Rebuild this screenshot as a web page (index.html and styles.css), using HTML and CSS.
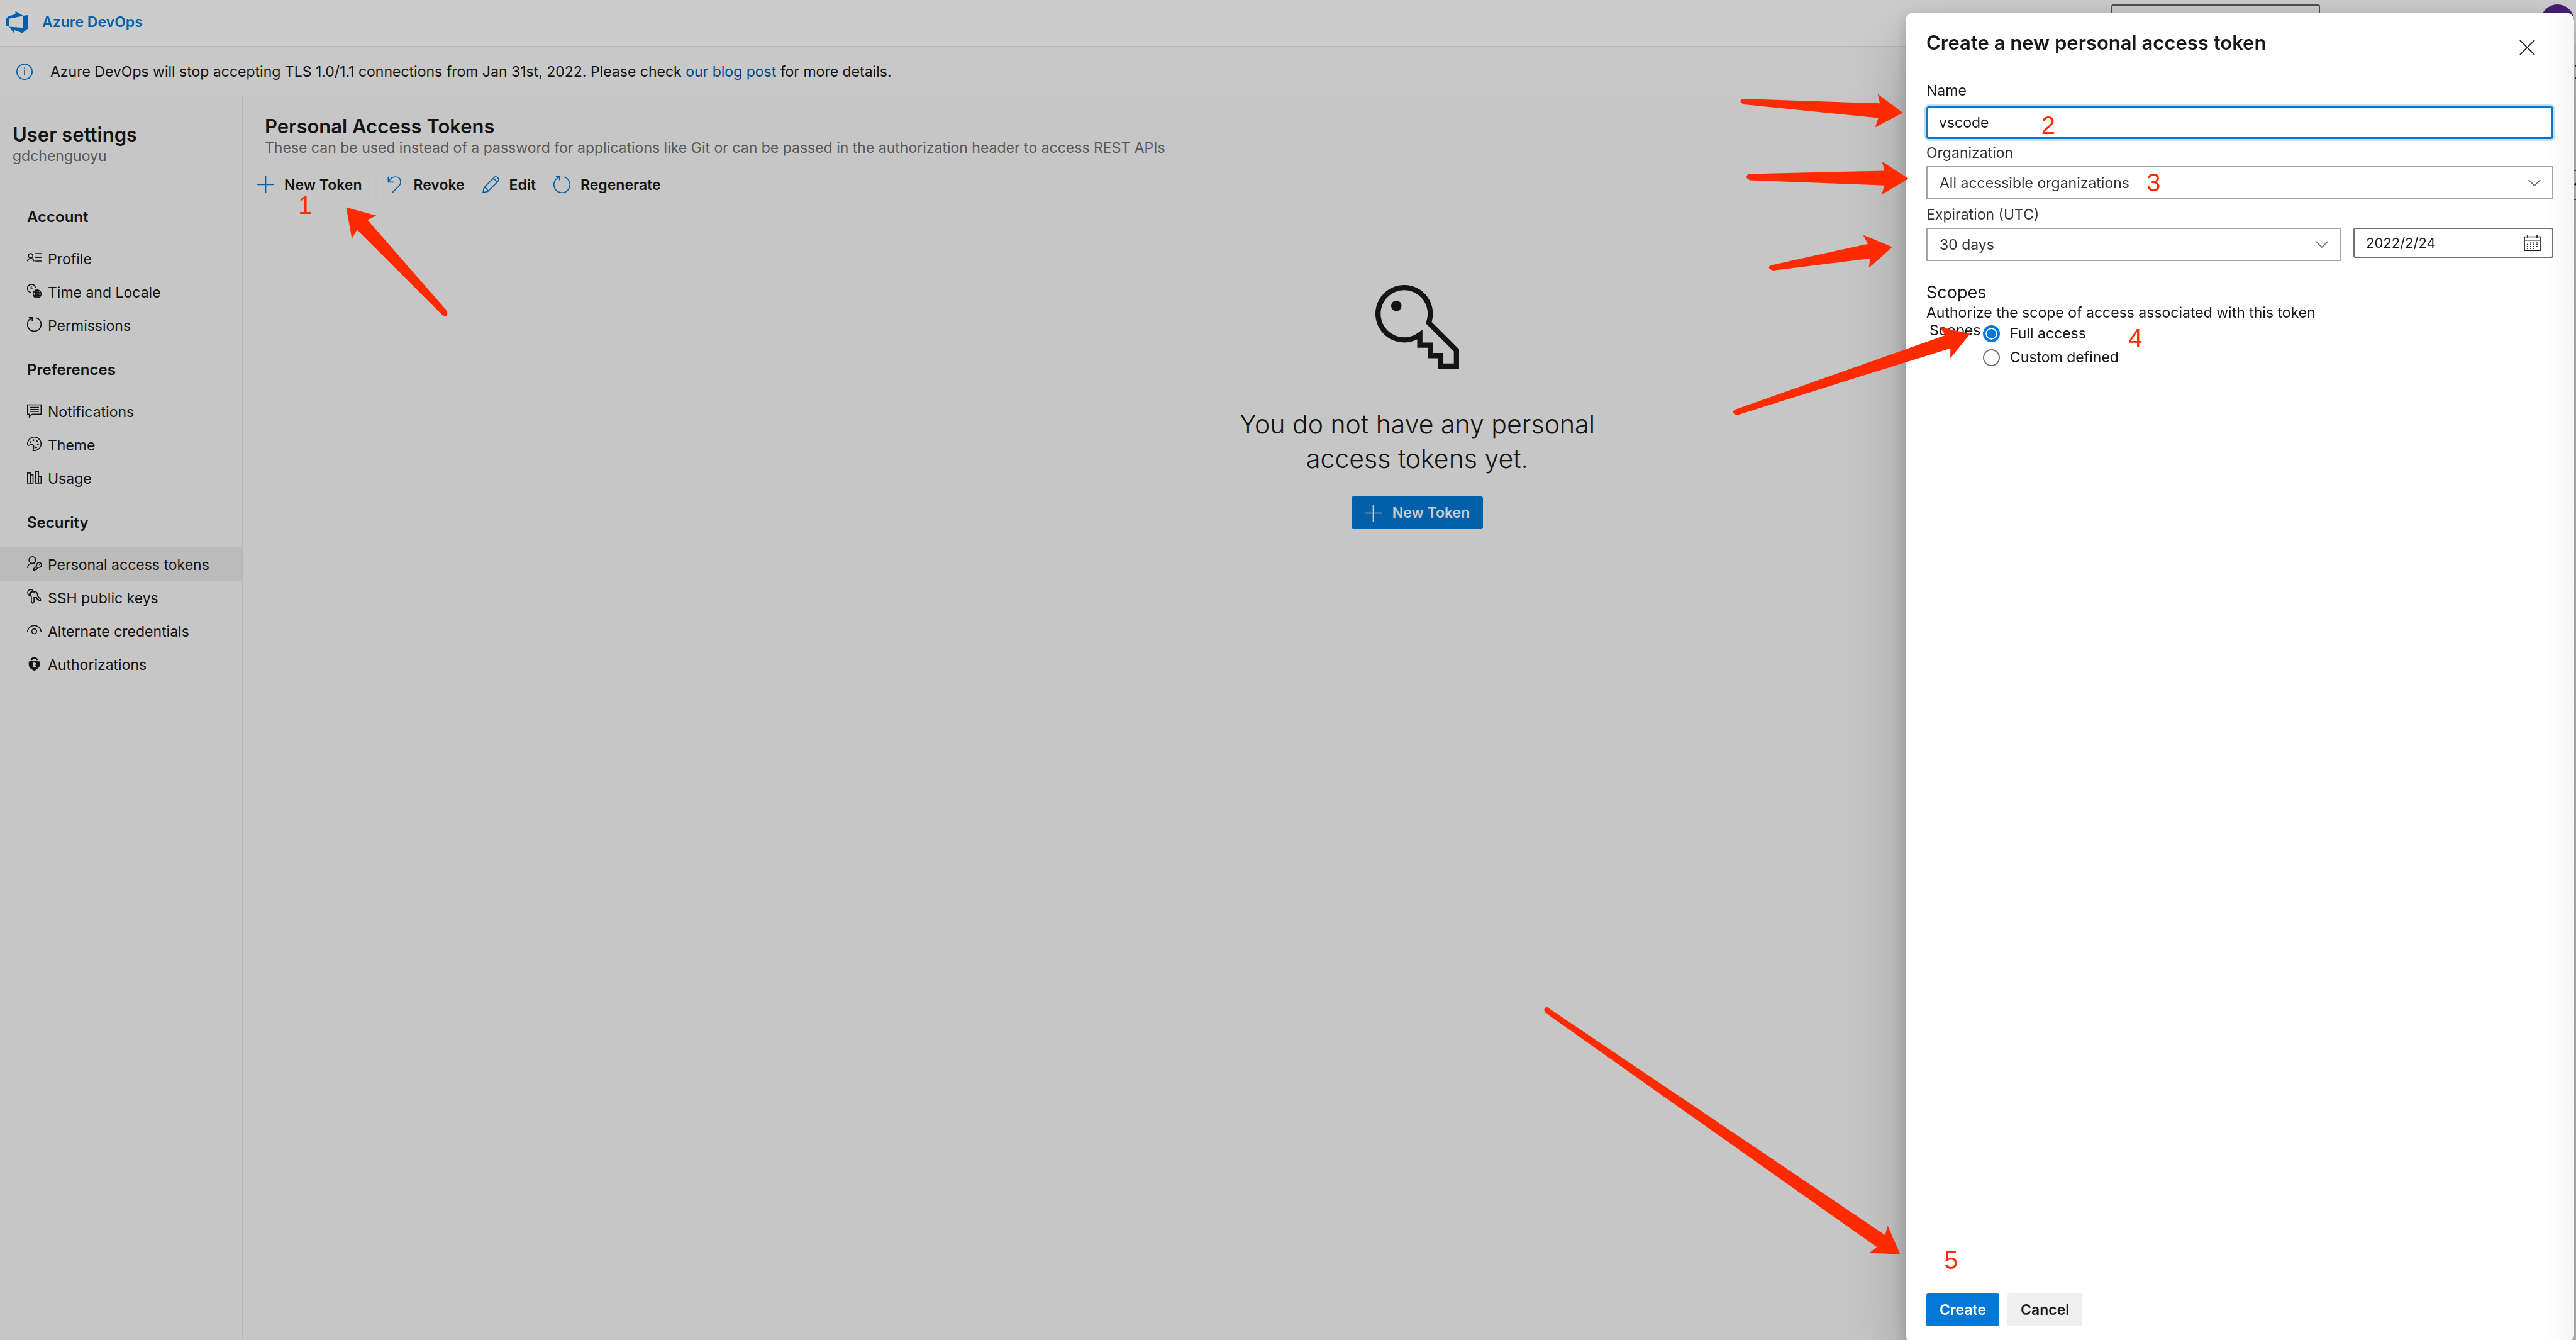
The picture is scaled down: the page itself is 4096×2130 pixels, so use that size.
FILE: index.html
```html
<!DOCTYPE html>
<html lang="en">
<head>
<meta charset="utf-8">
<title>Personal Access Tokens - User settings</title>
<link rel="stylesheet" href="styles.css">
</head>
<body>
<div class="app">
  <header class="topbar">
    <a class="brand" href="#">
      <svg class="brand-logo" viewBox="0 0 16 16" aria-hidden="true"><path d="M15 3.622v8.512L11.5 15l-5.425-1.975v1.958L3.004 10.97l8.951.7V4.005L15 3.622zm-2.984.428L6.994 1v2.001L2.382 4.356 1 6.13v4.029l1.978.873V5.869l9.038-1.818z"/></svg>
      <span>Azure DevOps</span>
    </a>
    <input class="global-search" type="search" aria-label="Search">
    <button class="avatar" type="button" aria-label="Account"></button>
  </header>

  <div class="banner">
    <svg class="banner-icon" viewBox="0 0 30 30" aria-hidden="true"><circle cx="15" cy="15" r="14"/><path d="M15 12.500V22M15 7.500V9.500"/></svg>
    <p class="banner-text">Azure DevOps will stop accepting TLS 1.0/1.1 connections from Jan 31st, 2022. Please check <a href="#">our blog post</a> for more details.</p>
    <button class="banner-close" type="button" aria-label="Dismiss"><svg viewBox="0 0 28 28"><path d="M1 1L27 27M27 1L1 27"/></svg></button>
  </div>

  <div class="body">
    <nav class="sidebar" aria-label="User settings">
      <div class="sidebar-head">
        <h1 class="title">User settings</h1>
        <p class="subtitle">gdchenguoyu</p>
      </div>
      <h2 class="group">Account</h2>
      <ul class="links">
        <li><a class="link" href="#"><svg viewBox="0 0 28 28"><circle cx="7" cy="10.500" r="4.300"/><path d="M.8 21.300a6.300 6.300 0 0 1 12.500 0M16 6.200h12M16 13.500h12M16 20.700h12"/></svg><span>Profile</span></a></li>
        <li><a class="link" href="#"><svg viewBox="0 0 28 28"><path d="M8.500 17a8 8 0 1 1 8.200-8.400M8 4v6h4.500"/><circle cx="19.500" cy="19.700" r="7.700"/><ellipse cx="19.500" cy="19.700" rx="3.500" ry="7.700"/><path d="M19.500 12v15.500M12.500 17h14M12.500 22.500h14"/></svg><span>Time and Locale</span></a></li>
        <li><a class="link" href="#"><svg viewBox="0 0 28 28"><path d="M17 1.300A13.200 13.200 0 1 1 9.500 1.700M3.300.9h6.700v6.500"/></svg><span>Permissions</span></a></li>
      </ul>
      <h2 class="group">Preferences</h2>
      <ul class="links">
        <li><a class="link" href="#"><svg viewBox="0 0 28 28"><path d="M.8 3h26.400v18H10l-5.500 5.500V21H.8zM5 8h18M5 12h18M5 15.800h18"/></svg><span>Notifications</span></a></li>
        <li><a class="link" href="#"><svg viewBox="0 0 28 28"><path d="M11.500 26.800C12 24 13.500 21 13 18.500C12.500 15.500 10 14.300 7.500 15.500C5.500 16.500 2 18.500 1 15.500C.3 8 6 .9 14 .9C21.500.9 27.200 7 27.200 14C27.200 22 20 28.500 11.500 26.800z"/><g class="solid"><circle cx="7" cy="10.500" r="1.700"/><circle cx="12.300" cy="7" r="1.700"/><circle cx="19" cy="9" r="1.700"/><circle cx="21" cy="15.500" r="1.700"/><circle cx="17.500" cy="21" r="1.700"/></g></svg><span>Theme</span></a></li>
        <li><a class="link" href="#"><svg viewBox="0 0 28 28"><path d="M.8 6h6v19.500h-6zM6.800 9.500h4.800v16H6.800zM16.500 2.800h5.700v22.700h-5.700zM22.200 13.300h5v12.200h-5z"/></svg><span>Usage</span></a></li>
      </ul>
      <h2 class="group">Security</h2>
      <ul class="links">
        <li><a class="link current" href="#" aria-current="page"><svg viewBox="0 0 28 28"><circle cx="10.300" cy="7.500" r="6.500"/><path d="M.8 23c.5-5.500 4.500-9 9.500-9 2 0 3.800.5 5.200 1.500"/><path d="M19 18.500a4.600 4.600 0 1 1 3 3l-1.500 1.800h-2v2.200h-2L15.200 27h-2.500v-2.500z"/><g class="solid"><circle cx="24.200" cy="16.500" r="1"/></g></svg><span>Personal access tokens</span></a></li>
        <li><a class="link" href="#"><svg viewBox="0 0 28 28"><path d="M5 11.500A5.800 5.800 0 1 1 12 3M8.500 14.500a6.700 6.700 0 1 1 11.500-2l6 6v2.500h-3l-1-2h-2l-1.500-3.500H13.500V24l-2.500 3-2.500-2.500z"/><path d="M4 11.500C4 7 7 4 11 4c2.500 0 3 1.500 2.500 3.500"/></svg><span>SSH public keys</span></a></li>
        <li><a class="link" href="#"><svg viewBox="0 0 28 28"><path d="M.8 17C1.500 10 7 5.300 14 5.300S26.500 10 27.200 17"/><circle cx="14" cy="16.500" r="4.700"/></svg><span>Alternate credentials</span></a></li>
        <li><a class="link" href="#"><svg viewBox="0 0 28 28"><path class="bold" d="M8.300 7.500a6 6 0 0 1 11.400 0"/><path class="fill" d="M3.300 10.500C8 8.500 20 8.500 24.700 10.500V16C24.700 22 19.500 26 14 28C8.500 26 3.300 22 3.300 16z"/><path class="hole" d="M14 12a3.200 3.200 0 0 1 2 5.700l1.700 3.600h-7.400L12 17.700A3.200 3.200 0 0 1 14 12z"/></svg><span>Authorizations</span></a></li>
      </ul>
    </nav>

    <main class="main">
      <div class="main-head">
        <h1 class="title">Personal Access Tokens</h1>
        <p class="subtitle">These can be used instead of a password for applications like Git or can be passed in the authorization header to access REST APIs</p>
      </div>
      <div class="toolbar">
        <button class="tool" type="button"><svg viewBox="0 0 32 32"><path d="M16 0V32M0 16H32"/></svg>New Token</button>
        <span class="divider"></span>
        <button class="tool" type="button"><svg viewBox="0 0 32 32"><path d="M4 1v10h10M4.500 10.500C8 4 13 1.200 18 1.200c6 0 9.500 4.500 9.500 10C27.500 16.500 24 19 11 31.500"/></svg>Revoke</button>
        <button class="tool" type="button"><svg viewBox="0 0 32 32"><path d="M1 31l2.200-9.500L22.500 2.300c4-3.600 10.500 2.500 7.200 7L10.500 28.700zM3.200 21.500c3.500.5 6.500 3.500 7.300 7.200M19.800 5c3.500.7 6.400 3.500 7.200 7.200"/></svg>Edit</button>
        <button class="tool" type="button"><svg viewBox="0 0 32 32"><path d="M20 1.500A15.100 15.100 0 1 1 10.500 2M4.500.8h7v7"/></svg>Regenerate</button>
        <button class="filter" type="button" aria-label="Filter"><svg viewBox="0 0 28 28"><path d="M1 15L14 2L27 15"/></svg></button>
      </div>
      <section class="empty">
        <svg class="empty-key" viewBox="0 0 160 160" aria-hidden="true"><path d="M102 72A50 50 0 1 0 85 95V115H105V135H125V155H155V125z"/><circle cx="40" cy="40" r="10"/></svg>
        <p class="empty-text">You do not have any personal<br>access tokens yet.</p>
        <button class="btn primary" type="button"><svg viewBox="0 0 32 32"><path d="M16 0V32M0 16H32"/></svg>New Token</button>
      </section>
    </main>
  </div>
  <div class="scrim"></div>
</div>

<form class="panel" role="dialog" aria-labelledby="panel-title">
  <div class="panel-head">
    <h2 class="title" id="panel-title">Create a new personal access token</h2>
    <button class="close" type="button" aria-label="Close"><svg viewBox="0 0 28 28"><path d="M1 1L27 27M27 1L1 27"/></svg></button>
  </div>
  <div class="field name-field">
    <label for="name">Name</label>
    <input class="box focused" id="name" type="text" value="vscode">
  </div>
  <div class="field">
    <label class="soft" for="org">Organization</label>
    <span class="picker">
      <select class="box" id="org"><option>All accessible organizations</option></select>
      <svg viewBox="0 0 24 14" aria-hidden="true"><path d="M1 1L12 12L23 1"/></svg>
    </span>
  </div>
  <div class="field">
    <label class="soft" for="expiry">Expiration (UTC)</label>
    <div class="expiry-row">
      <span class="picker">
        <select class="box" id="expiry"><option>30 days</option></select>
        <svg viewBox="0 0 24 14" aria-hidden="true"><path d="M1 1L12 12L23 1"/></svg>
      </span>
      <span class="date">
        <input type="text" value="2022/2/24" aria-label="Expiration date">
        <button type="button" aria-label="Open calendar"><svg viewBox="0 0 32 30"><path d="M1 3h30v26H1zM1 9.300h30M7 0v5.500M25 0v5.500"/><path class="dots" d="M12 13h15M6 17.300h21M6 21.500h21M6 25.500h15"/></svg></button>
      </span>
    </div>
  </div>
  <h3 class="scopes-title">Scopes</h3>
  <p class="scopes-note">Authorize the scope of access associated with this token</p>
  <div class="scopes" role="radiogroup" aria-labelledby="scopes-label">
    <span class="scopes-label" id="scopes-label">Scopes</span>
    <div class="options">
      <label class="option"><input type="radio" name="scope" checked>Full access</label>
      <label class="option"><input type="radio" name="scope">Custom defined</label>
    </div>
  </div>
  <div class="panel-foot">
    <button class="btn primary" type="submit">Create</button>
    <button class="btn" type="button">Cancel</button>
  </div>
</form>

<svg class="marks" viewBox="0 0 4934 2566" preserveAspectRatio="xMinYMin meet" aria-hidden="true">
  <path d="M663 397L721 413L704 421L855 594Q860 604 852 606L846 602L684 440L674 457z"/>
  <path d="M3645 216L3597 180L3601 198L3338 189Q3328 195 3341 200L3598 226L3592 244z"/>
  <path d="M3656 342L3605 309L3610 327L3351 333Q3339 338 3352 345L3610 355L3604 373z"/>
  <path d="M3625 473L3569 450L3578 467L3392 508Q3383 513 3396 518L3582 495L3580 513z"/>
  <path d="M3774 639L3716 626L3726 642L3322 785Q3316 791 3327 795L3736 667L3736 686z"/>
  <path d="M3640 2402L3616 2347L3611 2365L2963 1928Q2954 1932 2961 1940L3595 2388L3581 2399z"/>
  <text x="571" y="410">1</text>
  <text x="3910" y="256">2</text>
  <text x="4112" y="366">3</text>
  <text x="4077" y="664">4</text>
  <text x="3724" y="2430">5</text>
</svg>
</body>
</html>
```
FILE: styles.css
```css
* { box-sizing: border-box; }

body {
  margin: 0;
  font: 400 23px/28px Inter, "Noto Sans", sans-serif;
  color: #191919;
  overflow: hidden;
}

h1, h2, h3, p, ul { margin: 0; padding: 0; font-weight: 400; }
ul { list-style: none; }
button, input, select { font: inherit; color: inherit; }
button { background: none; border: 0; padding: 0; }
svg { display: block; flex: none; fill: none; stroke: currentColor; }

.title { font-size: 31px; line-height: 40px; font-weight: 600; }
.subtitle { color: #6e6e6e; }

.app {
  position: relative;
  display: flex;
  flex-direction: column;
  min-height: 100vh;
  background: #f8f8f8;
  overflow: hidden;
}

/* Top bar */
.topbar {
  display: flex;
  align-items: flex-start;
  height: 75px;
  padding: 7px 3px 0 7px;
  background: #fff;
  border-bottom: 2px solid #e4e4e4;
}
.brand {
  display: flex;
  align-items: center;
  gap: 20px;
  margin-right: auto;
  padding-top: 8px;
  color: #0078d4;
  font-weight: 600;
  text-decoration: none;
}
.brand-logo { width: 40px; height: 40px; fill: currentColor; stroke: none; }
.global-search {
  width: 332px;
  height: 53px;
  margin-right: 351px;
  background: #fff;
  border: 2px solid #666;
  border-radius: 3px;
}
.avatar { width: 53px; height: 53px; border-radius: 50%; background: #5c2590; }

/* Banner */
.banner {
  display: flex;
  align-items: center;
  gap: 28px;
  height: 78px;
  padding-left: 26px;
  background: #fafafa;
}
.banner-icon { width: 26px; height: 26px; stroke: #0078d4; stroke-width: 2; }
.banner-text { flex: 1; }
.banner-text a { color: #005a9e; text-decoration: none; }
.banner-close { margin-right: -21px; }
.banner-close svg { width: 23px; height: 23px; stroke-width: 2; }

/* Sidebar */
.body { display: flex; flex: 1; }
.sidebar { width: 387px; border-right: 2px solid #e4e4e4; }
.sidebar-head { padding: 41px 0 38px 20px; }
.group {
  height: 84px;
  padding: 31px 0 0 43px;
  font-size: 24px;
  line-height: 28px;
  font-weight: 600;
}
.link {
  display: flex;
  align-items: center;
  gap: 10px;
  height: 53px;
  padding: 2px 0 0 43px;
  color: inherit;
  text-decoration: none;
}
.link svg { width: 23px; height: 23px; margin-bottom: 5px; stroke-width: 2; }
.link.current { background: #eaeaea; }
.solid { fill: currentColor; stroke: none; }
.bold { stroke-width: 3; }
.fill { fill: currentColor; stroke: none; }
.hole { fill: #f8f8f8; stroke: none; }

/* Main area */
.main { flex: 1; min-width: 0; }
.main-head { padding: 28px 34px 19px; }
.toolbar {
  display: flex;
  align-items: center;
  height: 53px;
  padding-left: 8px;
  border-bottom: 2px solid #f4f4f4;
}
.tool {
  display: flex;
  align-items: center;
  gap: 16px;
  padding: 0 14px;
  font-weight: 600;
}
.tool svg { width: 27px; height: 27px; stroke: #0078d4; stroke-width: 2; }
.divider { width: 2px; height: 51px; margin: 0 1px 0 8px; background: #f4f4f4; }
.filter {
  display: flex;
  align-items: center;
  height: 48px;
  margin-left: auto;
  margin-right: -22px;
  padding-left: 14px;
  border: 2px solid #666;
}
.filter svg { width: 23px; height: 23px; stroke-width: 3; }

.empty {
  display: flex;
  flex-direction: column;
  align-items: center;
  padding: 132px 0 0 24px;
}
.empty-key { width: 133px; height: 133px; stroke-width: 10; }
.empty-key circle { fill: currentColor; stroke: none; }
.empty-text {
  margin: 61px 0 32px;
  font-size: 41px;
  font-weight: 300;
  line-height: 55px;
  text-align: center;
}

.btn {
  display: flex;
  align-items: center;
  gap: 17px;
  height: 52px;
  padding: 0 21px;
  border-radius: 3px;
  background: #efefef;
  font-weight: 600;
}
.btn.primary { background: #0078d4; color: #fff; }
.btn svg { width: 27px; height: 27px; stroke-width: 2; }

.scrim { position: absolute; inset: 0; background: rgba(0, 0, 0, 0.2); }

/* Side panel */
.panel {
  position: fixed;
  top: 20px;
  right: 3px;
  bottom: -4px;
  display: flex;
  flex-direction: column;
  width: 1063px;
  max-width: 100%;
  padding: 24px 33px 26px;
  border-radius: 13px;
  background: linear-gradient(to left, #f5f5f5, #fff 44px);
  box-shadow: 0 42px 96px rgba(0, 0, 0, 0.22), 0 8px 24px rgba(0, 0, 0, 0.18);
}
.panel-head {
  display: flex;
  justify-content: space-between;
  height: 86px;
}
.panel-head .title { padding-top: 4px; }
.close {
  display: grid;
  place-items: center;
  width: 48px;
  height: 48px;
  margin: 7px 18px 0 0;
}
.close svg { width: 25px; height: 25px; stroke-width: 2; }

.field { margin-bottom: 10px; }
.field label { display: block; margin-bottom: 7px; }
.soft { color: #333; }
.name-field { margin-bottom: 8px; }
.name-field label { margin-bottom: 11px; }
.box {
  display: block;
  width: 100%;
  height: 53px;
  padding: 0 19px;
  border: 2px solid #a3a3a3;
  border-radius: 0;
  background: #fff;
  color: #333;
  appearance: none;
  outline: 0;
}
.box.focused {
  height: 52px;
  padding: 0 17px;
  border: 3px solid #0078d4;
  border-radius: 4px;
  box-shadow: 0 0 0 3px #c3e0f4;
  color: #191919;
}
.picker { display: grid; flex: 1; align-items: center; }
.picker > * { grid-area: 1 / 1; }
.picker svg {
  justify-self: end;
  width: 20px;
  height: 12px;
  margin-right: 20px;
  stroke: #666;
  stroke-width: 2;
}
.expiry-row { display: flex; gap: 20px; align-items: flex-start; }
.date {
  display: flex;
  align-items: center;
  width: 318px;
  height: 48px;
  padding: 0 18px;
  border: 2px solid #6e6e6e;
  border-radius: 3px;
}
.date input { flex: 1; min-width: 0; padding: 0; border: 0; background: none; outline: 0; font-size: 22px; }
.date svg { width: 27px; height: 25px; stroke-width: 2; }
.date .dots { stroke-dasharray: 2 4; }

.scopes-title { margin-top: 22px; font-size: 27px; line-height: 36px; }
.scopes { display: flex; gap: 7px; }
.scopes-label { width: 83px; padding-left: 5px; }
.option { display: flex; align-items: center; gap: 16px; height: 38px; }
.option input {
  appearance: none;
  width: 27px;
  height: 27px;
  margin: 0;
  border: 2px solid #6e6e6e;
  border-radius: 50%;
  background: #fff;
}
.option input:checked {
  border: 4px solid #0078d4;
  background: #0078d4;
  box-shadow: inset 0 0 0 2px #fff;
}
.panel-foot { display: flex; gap: 13px; margin-top: auto; }

/* Walkthrough marks */
.marks {
  position: fixed;
  inset: 0;
  width: 100%;
  height: 100%;
  fill: #ff2a00;
  stroke: none;
  pointer-events: none;
}
.marks text { font: 48px "Liberation Sans", Arial, sans-serif; }
```
